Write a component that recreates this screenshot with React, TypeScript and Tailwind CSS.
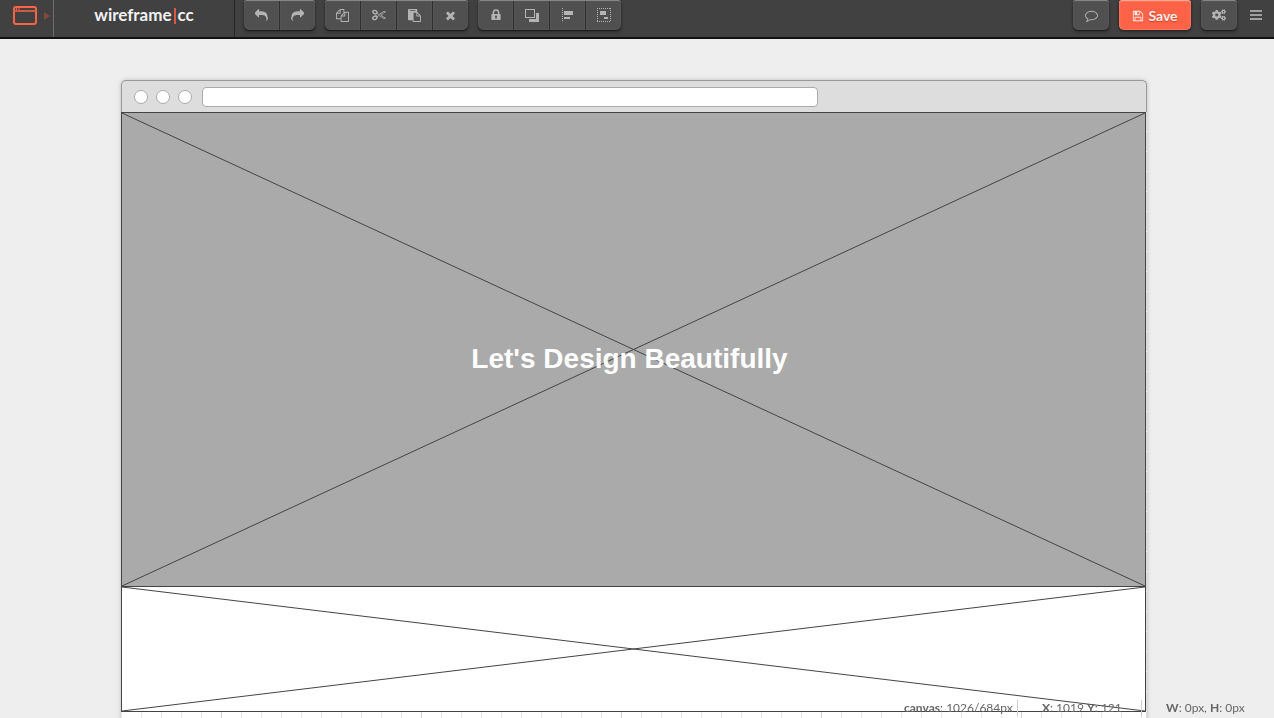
import type { ReactNode } from "react";
import { FaCogs } from "react-icons/fa";

const paths = {
  reply:
    "M1792 1120q0 166-127 451-3 7-10.5 24t-13.5 30-13 22q-12 17-28 17-15 0-23.5-10t-8.5-25q0-9 2.5-26.5t2.5-23.5q5-68 5-123 0-112-19.5-200.5t-54-153.5-89-112-117.5-80-147-45.5-170.5-24-195.5-6.5h-224v256q0 26-19 45t-45 19-45-19l-512-512q-19-19-19-45t19-45l512-512q19-19 45-19t45 19 19 45v256h224q713 0 875 403 53 134 53 333z",
  copy: "M1696 384q40 0 68 28t28 68v1216q0 40-28 68t-68 28h-960q-40 0-68-28t-28-68v-288h-544q-40 0-68-28t-28-68v-672q0-40 20-88t48-76l408-408q28-28 76-48t88-20h416q40 0 68 28t28 68v328q68-40 128-40h416zm-544 213l-299 299h299v-299zm-640-384l-299 299h299v-299zm196 647l316-316v-416h-384v416q0 40-28 68t-68 28h-416v640h512v-256q0-40 20-88t48-76zm956 804v-1152h-384v416q0 40-28 68t-68 28h-416v640h896z",
  paste:
    "M768 1664h896v-640h-416q-40 0-68-28t-28-68v-416h-384v1152zm256-1440v-64q0-13-9.5-22.5t-22.5-9.5h-704q-13 0-22.5 9.5t-9.5 22.5v64q0 13 9.5 22.5t22.5 9.5h704q13 0 22.5-9.5t9.5-22.5zm256 672h299l-299-299v299zm512 128v672q0 40-28 68t-68 28h-960q-40 0-68-28t-28-68v-160h-544q-40 0-68-28t-28-68v-1344q0-40 28-68t68-28h1088q40 0 68 28t28 68v328q21 13 36 28l408 408q28 28 48 76t20 88z",
  times:
    "M1490 1322q0 40-28 68l-136 136q-28 28-68 28t-68-28l-294-294-294 294q-28 28-68 28t-68-28l-136-136q-28-28-28-68t28-68l294-294-294-294q-28-28-28-68t28-68l136-136q28-28 68-28t68 28l294 294 294-294q28-28 68-28t68 28l136 136q28 28 28 68t-28 68l-294 294 294 294q28 28 28 68z",
  comment:
    "M896 384q-204 0-381.5 69.5t-282 187.5-104.5 255q0 112 71.5 213.5t201.5 175.5l87 50-27 96q-24 91-70 172 152-63 275-171l43-38 57 6q69 8 130 8 204 0 381.5-69.5t282-187.5 104.5-255-104.5-255-282-187.5-381.5-69.5zm896 512q0 174-120 321.5t-326 233-450 85.5q-70 0-145-8-198 175-460 242-49 14-114 22h-5q-15 0-27-10.5t-16-27.5v-1q-3-4-.5-12t2-10 4.5-9.5l6-9 7-8.5 8-9q7-8 31-34.5t34.5-38 31-39.5 32.5-51 27-59 26-76q-157-89-247.5-220t-90.5-281q0-174 120-321.5t326-233 450-85.5 450 85.5 326 233 120 321.5z",
  save: "M512 1536h768v-384h-768v384zm896 0h128v-896q0-14-10-38.5t-20-34.5l-281-281q-10-10-34-20t-39-10v416q0 40-28 68t-68 28h-576q-40 0-68-28t-28-68v-416h-128v1280h128v-416q0-40 28-68t68-28h832q40 0 68 28t28 68v416zm-384-928v-320q0-13-9.5-22.5t-22.5-9.5h-192q-13 0-22.5 9.5t-9.5 22.5v320q0 13 9.5 22.5t22.5 9.5h192q13 0 22.5-9.5t9.5-22.5zm640 32v928q0 40-28 68t-68 28h-1344q-40 0-68-28t-28-68v-1344q0-40 28-68t68-28h928q40 0 88 20t76 48l280 280q28 28 48 76t20 88z",
};

function Glyph({ name, className = "size-[13px]" }: { name: keyof typeof paths; className?: string }) {
  return (
    <svg viewBox="0 0 1792 1792" fill="currentColor" className={className} aria-hidden="true">
      <path d={paths[name]} />
    </svg>
  );
}

function ScissorsIcon() {
  return (
    <svg viewBox="0 0 14 12" fill="none" stroke="currentColor" className="h-3 w-[14px]" aria-hidden="true">
      <ellipse cx="2.9" cy="3.1" rx="2.2" ry="1.6" strokeWidth="1.4" transform="rotate(25 2.9 3.1)" />
      <ellipse cx="2.9" cy="8.9" rx="2.2" ry="1.6" strokeWidth="1.4" transform="rotate(-25 2.9 8.9)" />
      <path d="M4.8 4.2 7 5.500l5-3.200 1.500.5L8.600 6l4.900 3.200-1.500.5-5-3.200-2.200 1.300" strokeWidth=".8" />
    </svg>
  );
}

function LockIcon() {
  return (
    <svg viewBox="0 0 10 12" className="h-3 w-[10px]" aria-hidden="true">
      <path d="M2.4 5.5V3.6a2.6 2.6 0 0 1 5.2 0v1.9" fill="none" stroke="currentColor" strokeWidth="1.5" />
      <path
        fill="currentColor"
        fillRule="evenodd"
        d="M1 5h8q.6 0 .6.6v4.8q0 .6-.6.6H1q-.6 0-.6-.6V5.600Q.4 5 1 5zm4 1.500a1 1 0 0 0-.5 1.900V10h1V8.400A1 1 0 0 0 5 6.500z"
      />
    </svg>
  );
}

function ArrangeIcon() {
  return (
    <svg viewBox="0 0 14 13" className="h-[13px] w-[14px]" shapeRendering="crispEdges" aria-hidden="true">
      <rect x=".5" y=".5" width="9" height="8" fill="none" stroke="currentColor" />
      <path d="M11 4h3v9H4v-3h7z" fill="currentColor" />
    </svg>
  );
}

function AlignIcon() {
  return (
    <svg viewBox="0 0 11 14" className="h-[14px] w-[11px]" shapeRendering="crispEdges" aria-hidden="true">
      <path d="M.5 0v14" stroke="currentColor" strokeDasharray="1 1" />
      <path d="M2 3h9v4H2zM2 9h6v2H2z" fill="currentColor" />
    </svg>
  );
}

function GroupIcon() {
  return (
    <svg viewBox="0 0 14 14" className="size-[14px]" shapeRendering="crispEdges" aria-hidden="true">
      <path d="M0 .5h14M0 13.500h14M.5 0v14M13.500 0v14" stroke="currentColor" strokeDasharray="1 1" />
      <path d="M3 3h6v4H3zM7 9h4v2H7z" fill="currentColor" />
    </svg>
  );
}

function ButtonGroup({ children }: { children: ReactNode }) {
  return (
    <div className="flex h-[30px] divide-x divide-[#303030] overflow-hidden rounded-b-[5px] rounded-t-[3px] border-t border-t-[#858585] bg-[#505050] shadow-[0_1px_1px_#1c1c1c,0_2px_2px_1px_#363636]">
      {children}
    </div>
  );
}

function ToolButton({ label, children }: { label: string; children: ReactNode }) {
  return (
    <button
      type="button"
      aria-label={label}
      className="flex w-9 items-center justify-center pb-px text-[#b4b4b4] shadow-[inset_0_0_1px_#777] last:not-first:w-[35px] hover:bg-[#5a5a5a]"
    >
      {children}
    </button>
  );
}

function Toolbar() {
  return (
    <header className="flex h-[39px] shrink-0 items-start border-b-2 border-[#131011] bg-[#414141]">
      <button type="button" aria-label="Choose device" className="flex h-full w-[53px] items-start gap-[7px] pl-[13px] pt-[6px]">
        <svg viewBox="0 0 24 19" className="h-[19px] w-6" aria-hidden="true">
          <rect x="1" y="1" width="22" height="17" rx="2" fill="none" stroke="#ff6347" strokeWidth="2" />
          <path d="M1 5h22" stroke="#ff6347" strokeWidth="1.500" />
          <path d="M3 3h1M5.500 3h1" stroke="#ff6347" strokeWidth="2" />
        </svg>
        <svg viewBox="0 0 6 8" className="mt-[6px] h-2 w-[6px]" aria-hidden="true">
          <path d="M0 0 6 4 0 8z" fill="#844a40" />
        </svg>
      </button>
      <a
        href="#home"
        className="flex h-full w-[182px] items-start justify-center border-x border-l-[#6b6b6b] border-r-[#252525] pt-[3px] text-[17px] leading-6 font-bold text-[#f2f2f2]"
      >
        wireframe<span className="mx-[2px] mt-[5px] h-4 w-[2px] bg-[#d85843]" />cc
      </a>
      <div className="flex gap-[10px] pl-[9px]">
        <ButtonGroup>
          <ToolButton label="Undo"><Glyph name="reply" /></ToolButton>
          <ToolButton label="Redo"><Glyph name="reply" className="size-[13px] -scale-x-100" /></ToolButton>
        </ButtonGroup>
        <ButtonGroup>
          <ToolButton label="Copy"><Glyph name="copy" /></ToolButton>
          <ToolButton label="Cut"><ScissorsIcon /></ToolButton>
          <ToolButton label="Paste"><Glyph name="paste" /></ToolButton>
          <ToolButton label="Delete"><Glyph name="times" /></ToolButton>
        </ButtonGroup>
        <ButtonGroup>
          <ToolButton label="Lock"><LockIcon /></ToolButton>
          <ToolButton label="Arrange"><ArrangeIcon /></ToolButton>
          <ToolButton label="Align"><AlignIcon /></ToolButton>
          <ToolButton label="Group"><GroupIcon /></ToolButton>
        </ButtonGroup>
      </div>
      <div className="ml-auto flex gap-[10px] pr-3">
        <ButtonGroup>
          <ToolButton label="Comments"><Glyph name="comment" /></ToolButton>
        </ButtonGroup>
        <button
          type="button"
          className="flex h-[30px] w-[72px] items-center justify-center gap-1 rounded-b-[5px] rounded-t-[3px] border-t border-[#ffa596] bg-[#ff6347] text-[14px] font-bold text-[#ffebe7] shadow-[inset_0_0_2px_#ff9c8a,0_1px_2px_1px_#2c2c2c] text-shadow-[0_1px_1px_#b94430]"
        >
          <Glyph name="save" className="size-3" />
          Save
        </button>
        <ButtonGroup>
          <ToolButton label="Settings"><FaCogs className="size-[14px]" /></ToolButton>
        </ButtonGroup>
        <button type="button" aria-label="Menu" className="ml-[3px] flex h-[30px] items-center">
          <svg viewBox="0 0 12 10" className="h-[10px] w-3" shapeRendering="crispEdges" aria-hidden="true">
            <path d="M0 1h12M0 5h12M0 9h12" stroke="#a0a0a0" strokeWidth="2" />
          </svg>
        </button>
      </div>
    </header>
  );
}

function Placeholder({ className, children }: { className: string; children?: ReactNode }) {
  return (
    <div className={`relative flex items-center justify-center border-[#444] ${className}`}>
      <svg className="absolute inset-0 size-full" viewBox="0 0 100 100" preserveAspectRatio="none" aria-hidden="true">
        <path d="M0 0 100 100M100 0 0 100" stroke="#444" strokeWidth="1" vectorEffect="non-scaling-stroke" />
      </svg>
      {children}
    </div>
  );
}

function BrowserCanvas() {
  return (
    <div className="w-full max-w-[1026px] rounded-t-[5px] shadow-[0_0_4px_#bbb]">
      <div className="flex h-8 items-center rounded-t-[5px] border border-b-0 border-[#999] bg-[#ddd] pl-3">
        <div className="flex gap-2">
          <span className="size-[14px] rounded-full border border-[#aaa] bg-white" />
          <span className="size-[14px] rounded-full border border-[#aaa] bg-white" />
          <span className="size-[14px] rounded-full border border-[#aaa] bg-white" />
        </div>
        <input
          type="text"
          aria-label="Address"
          className="ml-[10px] h-5 w-[616px] rounded-[4px] border border-[#aaa] bg-white px-2 text-xs outline-none"
        />
      </div>
      <div className="bg-[repeating-linear-gradient(#ddd_0_19px,#fff_19px_20px)] pr-px">
        <Placeholder className="h-[474px] border-x border-t bg-[#aaa]">
          <h1 className="relative mt-[18px] mr-2 font-['Liberation_Sans',Arial,sans-serif] text-[28px] leading-8 font-bold text-white">
            Let's Design Beautifully
          </h1>
        </Placeholder>
        <Placeholder className="h-[126px] border bg-white" />
        <div className="h-[84px] bg-white bg-[repeating-linear-gradient(90deg,transparent_0_100px,#d0d0d0_100px_101px,transparent_101px_200px),repeating-linear-gradient(90deg,#e8e8e8_0_1px,#fff_1px_20px)]" />
      </div>
    </div>
  );
}

function StatusBar() {
  return (
    <footer className="fixed right-0 bottom-0 flex h-[18px] items-start text-[12px] leading-4 text-[#666]">
      <p className="w-[114px] border-r border-[#ccc]"><b>canvas</b>: 1026/684px</p>
      <p className="w-[124px] border-r border-[#ccc] pl-6"><b>X</b>: 1019 <b>Y</b>: 121</p>
      <p className="w-[132px] pl-6"><b>W</b>: 0px, <b>H</b>: 0px</p>
    </footer>
  );
}

export default function App() {
  return (
    <div className="flex h-screen flex-col overflow-hidden bg-[#eee] font-[Lato,sans-serif]">
      <Toolbar />
      <main className="flex min-h-0 flex-1 items-start justify-center overflow-hidden pt-[41px] pr-[6px]">
        <BrowserCanvas />
      </main>
      <StatusBar />
    </div>
  );
}
